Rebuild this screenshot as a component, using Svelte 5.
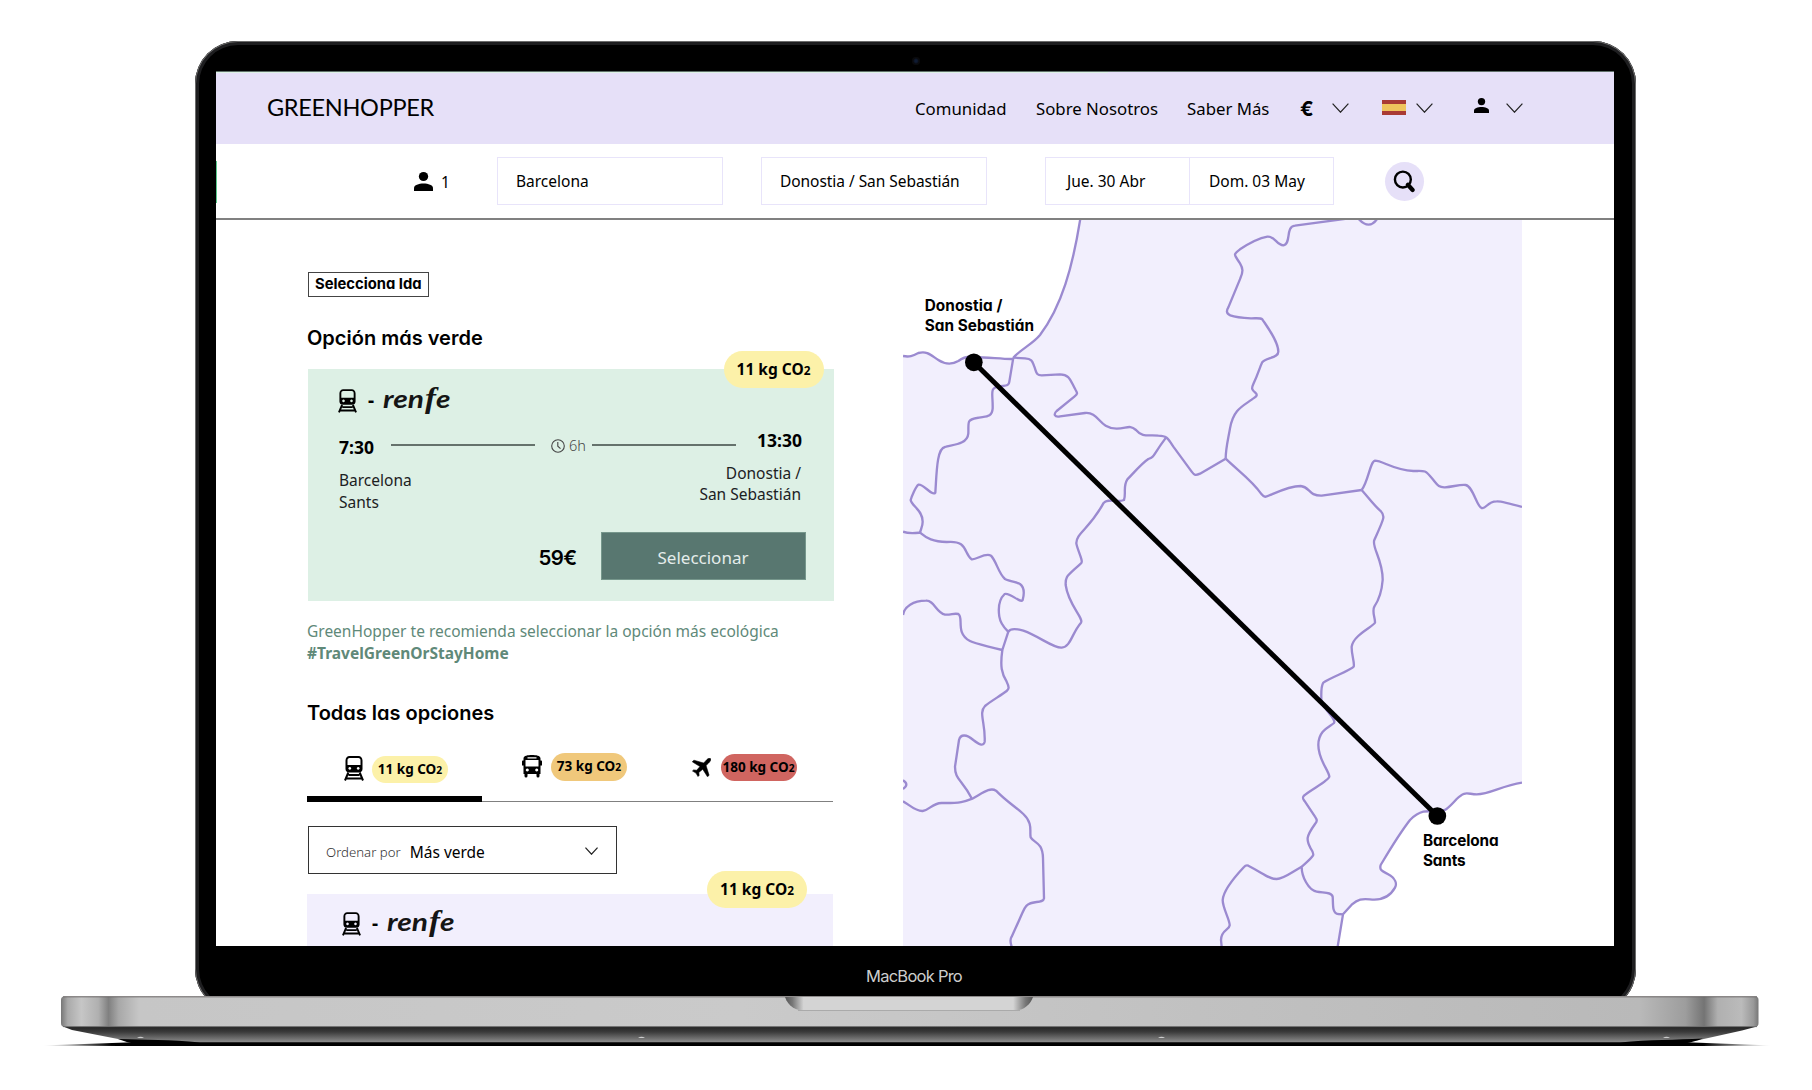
<script>
  const links = [
    { label: 'Comunidad', cls: 'l1' },
    { label: 'Sobre Nosotros', cls: 'l2' },
    { label: 'Saber Más', cls: 'l3' }
  ];

  const borders = [
    'M571 26C548 170 515 290 450 375C428 402 392 418 370 443',
    'M370 447C340 448 300 442 251 441C232 438 220 442 205 453C188 463 168 465 145 450C122 435 112 422 85 429C68 438 58 442 39 438',
    'M370 443L405 445C428 447 427 455 433 470C440 488 438 496 455 496L510 493C540 494 540 510 557 540C563 550 563 552 553 560L500 603C490 612 493 622 510 619L585 609C628 605 625 655 680 656C712 655 718 643 738 660C757 683 775 674 805 677C835 679 832 684 850 710L905 785C913 796 917 797 930 791L1007 746',
    'M1007 746C1007 715 1014 690 1020 655C1030 600 1055 590 1085 569C1093 562 1106 558 1097 549C1085 540 1084 535 1090 522C1105 490 1110 470 1116 458C1125 442 1165 445 1165 425C1165 395 1135 355 1117 328C1112 323 1100 325 1085 325C1065 324 1040 323 1021 316C1007 310 1010 300 1015 292L1051 205C1060 185 1059 175 1050 160C1032 132 1028 135 1050 118C1080 98 1110 84 1132 80C1155 78 1160 105 1180 106C1205 102 1185 50 1215 47L1370 26',
    'M1405 26Q1438 62 1462 26',
    'M1007 746C1045 783 1085 810 1115 853C1125 866 1130 859 1145 853C1180 838 1205 828 1232 828C1260 830 1255 858 1295 857L1415 840',
    'M1415 840C1435 815 1440 755 1455 752C1478 752 1510 780 1570 783C1605 783 1604 780 1620 798C1642 822 1642 833 1665 832C1690 830 1710 823 1727 825C1750 830 1760 890 1775 894C1790 897 1790 875 1820 874Q1835 873 1896 891',
    'M1415 840C1437 865 1455 890 1472 903C1487 918 1482 925 1453 990C1444 1010 1479 1050 1478 1110C1475 1150 1463 1175 1453 1190C1445 1205 1456 1225 1455 1238C1450 1250 1390 1275 1385 1310C1384 1335 1395 1360 1391 1370C1385 1380 1320 1403 1300 1418C1292 1430 1294 1450 1294 1470C1300 1500 1340 1525 1332 1539C1320 1550 1285 1560 1285 1605C1285 1650 1316 1680 1318 1700C1317 1712 1260 1740 1242 1757C1235 1764 1240 1768 1245 1775L1275 1820C1282 1830 1282 1833 1275 1842C1248 1880 1248 1890 1262 1915C1276 1935 1275 1935 1235 1970C1235 2000 1255 2040 1280 2045C1300 2049 1325 2045 1328 2060C1330 2080 1325 2110 1345 2112L1359 2113',
    'M1235 1970C1200 1990 1180 2007 1160 2007C1135 2007 1120 1990 1075 1967Q1068 1964 1062 1971C1030 2005 1000 2045 998 2070C998 2095 1020 2130 1019 2146C1018 2160 993 2160 993 2190L995 2210',
    'M1896 1718C1835 1727 1800 1753 1760 1753C1730 1752 1725 1742 1700 1767C1675 1795 1660 1808 1642 1805C1610 1802 1590 1800 1560 1830C1525 1875 1490 1935 1472 1965C1466 1985 1485 1985 1500 1996C1515 2006 1522 2020 1515 2033C1500 2060 1475 2072 1440 2068C1415 2066 1405 2067 1385 2084L1359 2113L1343 2210',
    'M370 443L358 515C357 530 345 526 325 530C298 535 309 550 308 595C306 625 285 618 260 624C230 630 236 635 235 670C232 705 185 704 165 711C140 715 140 790 136 848C126 860 100 820 85 824C78 828 65 860 62 870C65 888 98 900 98 935C98 950 92 958 90 968',
    'M39 965C55 972 70 970 90 968C110 985 130 995 170 996C235 990 220 1030 245 1048C260 1050 285 1027 303 1037C320 1055 325 1090 345 1107C360 1115 385 1117 390 1122C405 1133 402 1155 398 1170C390 1181 360 1146 344 1152C325 1170 325 1200 328 1220C332 1245 345 1255 355 1265L337 1320C270 1303 255 1301 240 1293C195 1270 222 1222 205 1212C190 1209 185 1215 165 1214C138 1208 132 1170 108 1172C70 1172 42 1190 39 1215',
    'M355 1265C362 1253 380 1256 400 1262C450 1280 490 1315 515 1313C543 1310 545 1270 573 1238C582 1225 535 1185 527 1125C526 1098 530 1100 573 1060C582 1055 562 1020 559 1000C558 970 600 955 640 880C655 862 680 880 702 870C709 850 698 830 712 808C730 790 755 760 775 747C795 740 785 740 828 683',
    'M337 1320C330 1370 335 1390 350 1415C360 1435 355 1438 350 1443C335 1455 300 1475 285 1488C265 1508 287 1540 284 1595C280 1612 265 1602 250 1590C230 1573 212 1571 207 1590L195 1670C195 1710 215 1707 245 1765',
    'M39 1774C60 1785 75 1804 98 1803C120 1800 125 1780 155 1779C210 1780 225 1775 247 1766C280 1748 300 1731 318 1742C350 1775 370 1785 400 1812C430 1840 418 1865 422 1882C432 1900 458 1895 459 1945L462 2065C460 2080 430 2072 415 2083C402 2090 400 2105 365 2180Q358 2190 365 2210',
    'M39 1711q20 12 0 26'
  ];
</script>

{#snippet train(cls)}
  <svg class={cls} viewBox="0 0 20 25">
    <path fill-rule="evenodd" d="M5.500 0h9C16.700 0 18.500 2 18.500 4.500V13C18.500 15 17 16.500 15 16.500H5C3 16.500 1.500 15 1.500 13V4.500C1.500 2 3.300 0 5.500 0ZM5.500 2C4.300 2 3.500 3 3.500 4.200V9H16.500V4.200C16.500 3 15.700 2 14.500 2ZM5.800 11a1.400 1.400 0 1 0 .01 0ZM14.200 11a1.400 1.400 0 1 0 .01 0Z" />
    <path d="M4.300 16.500 1 24.500M15.700 16.500 19 24.500M4.500 18.900h11M2.500 22.500h15" fill="none" stroke="#000" stroke-width="2" />
  </svg>
{/snippet}

{#snippet person(cls)}
  <svg class={cls} viewBox="0 0 20 20">
    <ellipse cx="10" cy="4.800" rx="4.900" ry="4.800" />
    <path d="M0 20V17C0 13.500 5 12 10 12S20 13.500 20 17V20Z" />
  </svg>
{/snippet}

{#snippet chevron(cls)}
  <svg class="chev {cls}" viewBox="0 0 17 10"><path d="M.6 .6 8.500 9.200 16.400 .6" /></svg>
{/snippet}

{#snippet co2(kg, cls)}
  <span class="badge {cls}">{kg} kg CO<small>2</small></span>
{/snippet}

{#snippet operator()}
  <div class="operator">
    {@render train('train')}
    <span class="dash">-</span>
    <svg class="renfe" viewBox="0 0 70 30">
      <text y="20" textLength="41" lengthAdjust="spacingAndGlyphs" x="1">ren</text>
      <text y="20" x="43" class="f" textLength="11" lengthAdjust="spacingAndGlyphs">f</text>
      <text y="20" x="54" textLength="14.500" lengthAdjust="spacingAndGlyphs">e</text>
    </svg>
  </div>
{/snippet}

<div class="stage">
  <div class="lid">
    <div class="shell">
      <div class="camera"></div>
      <div class="screen">
        <header>
          <div class="logo">GREENHOPPER</div>
          <nav>
            {#each links as link}
              <span class={link.cls}>{link.label}</span>
            {/each}
          </nav>
          <span class="euro">€</span>
          {@render chevron('c1')}
          <svg class="flag" viewBox="0 0 24 15"><path fill="#a93a34" d="M0 0h24v15H0z" /><path fill="#efc45c" d="M0 4h24v7H0z" /></svg>
          {@render chevron('c2')}
          {@render person('user')}
          {@render chevron('c3')}
        </header>

        <div class="search">
          {@render person('pax')}
          <span class="count">1</span>
          <div class="field">Barcelona</div>
          <div class="field to">Donostia / San Sebastián</div>
          <div class="dates"><div>Jue. 30 Abr</div><div>Dom. 03 May</div></div>
          <div class="go">
            <svg viewBox="0 0 24 24"><circle cx="10.300" cy="10" r="8.300" fill="none" stroke="#000" stroke-width="2.500" /><path d="M15.500 15.500 20.500 20.800" stroke="#000" stroke-width="4.500" stroke-linecap="round" /></svg>
          </div>
        </div>

        <main>
          <section class="results">
            <div class="tag">Selecciona Ida</div>
            <h2 class="h-a">Opción más verde</h2>
            <article class="card green">
              {@render co2(11, 'big')}
              {@render operator()}
              <div class="trip">
                <div class="from"><b>7:30</b><p>Barcelona<br />Sants</p></div>
                <i class="rule"></i>
                <span class="time">
                  <svg viewBox="0 0 14 14"><circle cx="7" cy="7" r="6.300" /><path d="M6.800 3V7.200L9.500 9.700" /></svg>6h
                </span>
                <i class="rule"></i>
                <div class="dest"><b>13:30</b><p>Donostia /<br />San Sebastián</p></div>
              </div>
              <div class="buy"><span class="price">59€</span><button>Seleccionar</button></div>
            </article>
            <p class="hint">GreenHopper te recomienda seleccionar la opción más ecológica<br /><b>#TravelGreenOrStayHome</b></p>
            <h2 class="h-b">Todas las opciones</h2>
            <div class="tabs">
              <div class="tab on">{@render train('t-train')}{@render co2(11, 'small yellow')}</div>
              <div class="tab bus">
                <svg class="t-bus" viewBox="0 0 20 23"><path fill-rule="evenodd" d="M10 0C14 0 18.500.5 18.500 3.500V5.500H19.300Q20 5.500 20 6.500V10.500H18.500V19H17.500V21Q17.500 22.500 16 22.500T14.500 21V19H5.500V21Q5.500 22.500 4 22.500T2.500 21V19H1.500V10.500H0V6.500Q0 5.500.7 5.500H1.500V3.500C1.500.5 6 0 10 0ZM3.500 5V11.500H16.500V5ZM5.500 2.200V3.400H14.500V2.200ZM5.300 13.500a1.500 1.500 0 1 0 .01 0ZM14.700 13.500a1.500 1.500 0 1 0 .01 0Z" /></svg>
                {@render co2(73, 'small orange')}
              </div>
              <div class="tab air">
                <svg class="t-air" viewBox="0 0 20 20"><path d="M17.200.5C18.500 0 20 .2 19.800 1.800 19.600 3.200 18 4.900 14.800 8L18 18.200 16.300 19.800 11.300 11.800 7.200 15.200 7.500 18.300 6.300 19.500 4.200 15.900.5 13.700 1.700 12.500 4.900 12.900 8.400 9 .3 4 2 2.300 12.200 5.300C14.800 2.700 16 1.100 17.200.5Z" stroke="#000" stroke-width=".6" /></svg>
                {@render co2(180, 'small red')}
              </div>
            </div>
            <div class="select"><span class="by">Ordenar por</span><span class="val">Más verde</span>{@render chevron('c4')}</div>
            <article class="card lilac">
              {@render co2(11, 'big second')}
              {@render operator()}
            </article>
          </section>

          <svg class="map" viewBox="39 30 1857 2178">
            <path fill="#f2effd" d="M39 30h1857v2178H39z" />
            <path fill="#fff" d="M571 26C548 170 515 290 450 375C428 402 392 418 370 443C340 448 300 442 251 441C232 438 220 442 205 453C188 463 168 465 145 450C122 435 112 422 85 429C68 438 58 442 39 438V26Z" />
            <path fill="#fff" d="{borders[9]}H1900V1718Z" />
            <g class="borders">
              {#each borders as d}
                <path {d} />
              {/each}
            </g>
            <path d="M251 457 1642 1818" stroke="#000" stroke-width="15" />
            <circle cx="251.500" cy="457" r="26.500" />
            <circle cx="1642" cy="1818" r="26.500" />
            <g class="places">
              <text x="104" y="304" textLength="233">Donostia /</text>
              <text x="104" y="362" textLength="328">San Sebastián</text>
              <text x="1599" y="1909" textLength="227">Barcelona</text>
              <text x="1599" y="1967" textLength="128">Sants</text>
            </g>
          </svg>
        </main>
      </div>
      <div class="model">MacBook Pro</div>
    </div>
  </div>

  <svg class="base" viewBox="0 996 1812 94">
    <defs>
      <linearGradient id="deck">
        <stop offset="0" stop-color="#777" /><stop offset=".004" stop-color="#aaa" /><stop offset=".012" stop-color="#c6c6c6" />
        <stop offset=".022" stop-color="#b0b0b0" /><stop offset=".028" stop-color="#808080" /><stop offset=".034" stop-color="#a8a8a8" />
        <stop offset=".046" stop-color="#c6c6c6" /><stop offset=".4" stop-color="#cacaca" /><stop offset=".7" stop-color="#c0c0c0" /><stop offset=".93" stop-color="#b9b9b9" />
        <stop offset=".957" stop-color="#9d9d9d" /><stop offset=".968" stop-color="#747474" /><stop offset=".976" stop-color="#b0b0b0" />
        <stop offset=".99" stop-color="#bbb" /><stop offset=".997" stop-color="#999" /><stop offset="1" stop-color="#777" />
      </linearGradient>
      <linearGradient id="under" x2="0" y2="1">
        <stop offset="0" stop-color="#222" /><stop offset=".35" stop-color="#3c3c3c" /><stop offset="1" stop-color="#909090" />
      </linearGradient>
      <linearGradient id="notch">
        <stop offset="0" stop-color="#555" /><stop offset=".03" stop-color="#777" /><stop offset=".075" stop-color="#d4d4d4" />
        <stop offset=".92" stop-color="#d4d4d4" /><stop offset=".97" stop-color="#777" /><stop offset="1" stop-color="#555" />
      </linearGradient>
      <linearGradient id="ground">
        <stop offset="0" stop-color="#000" stop-opacity="0" /><stop offset=".04" stop-color="#000" /><stop offset=".96" stop-color="#000" /><stop offset="1" stop-color="#000" stop-opacity="0" />
      </linearGradient>
    </defs>
    <path fill="url(#ground)" d="M42 1045.500 140 1042H1680L1772 1045.500 1700 1046H120Z" />
    <path fill="url(#under)" d="M63 1026.500H1757L1742 1030.500 1697 1040.500 1680 1042.500H135L118 1039 72 1030Z" />
    <path d="M118 1039C145 1040 170 1039.500 200 1042.500H1620C1650 1039.500 1675 1040 1703 1038.500 1692 1042.500 1680 1045.500 1660 1045.500H160C140 1045.500 130 1043.500 118 1039Z" />
    <path d="M61 1000Q61 996.500 64 996.500H1755.500Q1758.500 996.500 1758.500 1000V1023Q1758.500 1026.800 1755.500 1026.800H64Q61 1026.800 61 1023Z" fill="url(#deck)" />
    <path d="M63 1026.600H1757" stroke="#6d6d6d" stroke-width="1" />
    <path d="M63 996.800H1757" stroke="#6a6666" stroke-width="1" />
    <path d="M785 997C788 1006 796 1011 806 1011H1012C1022 1011 1030 1006 1033 997Z" fill="url(#notch)" />
    <path d="M798 1010.500H1020" stroke="#aaa" stroke-width="1" />
    <g fill="#ccc"><path d="M137 1038q3.500-2.500 7 0zM638 1038q3.500-2.500 7 0zM1158 1038q3.500-2.500 7 0zM1663 1038q3.500-2.500 7 0z" /></g>
  </svg>
</div>

<style>
  :global(body) { background: #fff; }
  .stage { width: 1812px; height: 1090px; overflow: hidden; background: #fff; font-family: 'Noto Sans', 'Open Sans', sans-serif; font-size: 15.500px; color: #000; }
  .stage :is(p, h2) { margin: 0; }
  .stage svg { display: block; flex: none; }
  .lid { margin: 41px 0 0 195px; width: 1441px; height: 955px; overflow: hidden; }
  .shell { box-sizing: border-box; width: 1441px; height: 971px; border-radius: 43px; background: #000; padding: 30px 22px 0 21px; box-shadow: inset 0 0 0 1px #6b6b6b, inset 0 0 0 4px #1e1e20; position: relative; }
  .camera { position: absolute; left: 717px; top: 16px; width: 8px; height: 8px; border-radius: 50%; background: radial-gradient(#0f1b33 20%, #08080a 55%, #121215); }
  .screen { width: 1398px; height: 875px; background: #fff; overflow: hidden; position: relative; border-top: 1px solid #60706a; box-sizing: border-box; }
  .screen::before { content: ''; position: absolute; left: 0; top: 0; width: 892px; height: 1px; background: #dcf1e5; }
  .screen::after { content: ''; position: absolute; left: 0; top: 89px; width: 1px; height: 42px; background: #58c98c; }
  .model { color: #cdcdcd; font: 400 16.500px/20px Inter, sans-serif; text-align: center; margin-top: 19.500px; letter-spacing: -.75px; padding-right: 2px; }

  header { height: 72px; background: #e6e0f8; display: flex; align-items: center; }
  .logo { font: 400 23.500px/28px Lato, sans-serif; margin: -2px 0 0 51px; width: 648px; letter-spacing: -.3px; }
  nav { display: flex; font-size: 16.800px; line-height: 24px; padding-top: 2px; white-space: nowrap; }
  .l1 { width: 121px; }
  .l2 { width: 151px; }
  .l3 { width: 113px; }
  .euro { font: 700 20px/24px Inter, sans-serif; width: 32px; padding-top: 2px; box-sizing: border-box; }
  .chev { width: 17px; height: 10px; margin-top: -1px; fill: none; stroke: #222; stroke-width: 1.200; }
  .c1 { margin-right: 33px; }
  .flag { width: 24px; height: 15px; margin: -2px 10px 0 0; }
  .c2 { margin-right: 41px; }
  .user { width: 15px; height: 15px; margin: 0 17px 5px 0; }

  .search { height: 74px; border-bottom: 2px solid #808080; display: flex; align-items: center; }
  .pax { width: 19px; height: 19px; margin-left: 198px; }
  .count { width: 56px; margin-left: 8px; padding-top: 1px; }
  .field { box-sizing: border-box; width: 226px; height: 48px; border: 1.500px solid #e8e4fa; padding-left: 18px; line-height: 47px; white-space: nowrap; }
  .to { margin-left: 38px; letter-spacing: -.05px; }
  .dates { display: flex; margin-left: 58px; width: 289px; height: 48px; box-sizing: border-box; border: 1.500px solid #e8e4fa; line-height: 46px; }
  .dates div { width: 143px; box-sizing: border-box; padding-left: 21px; }
  .dates div + div { border-left: 1px solid #e8e4fa; padding-left: 19px; }
  .go { width: 39px; height: 39px; border-radius: 50%; background: #e6e0f8; margin-left: 51px; display: grid; place-items: center; }
  .go svg { width: 23px; height: 23px; }

  main { display: flex; height: 726px; }
  .results { width: 526px; margin-left: 92px; padding-top: 52px; }
  .map { width: 619px; height: 726px; margin-left: 69px; }
  .borders { fill: none; stroke: #9b8ad0; stroke-width: 7; stroke-linejoin: round; }
  .places { font: 700 46px Inter, sans-serif; font-feature-settings: 'cv11'; }
  .tag { box-sizing: border-box; width: 121px; height: 25px; border: 1.500px solid #444; font: 700 14.800px/23px Inter, sans-serif; font-feature-settings: 'cv11'; padding-left: 6px; white-space: nowrap; }
  h2 { font: 600 20px/28px Inter, sans-serif; font-feature-settings: 'cv11'; white-space: nowrap; }
  .h-a { padding-top: 27px; margin-left: -1px !important; }
  .card { position: relative; box-sizing: border-box; width: 526px; padding-left: 30px; }
  .green { background: #ddf0e5; height: 232px; margin-top: 17px; padding-top: 20px; }
  .lilac { background: #f2effd; height: 80px; margin: 20px 0 0 -1px; padding: 18px 0 0 35px; }
  .badge { font-weight: 700; white-space: nowrap; border-radius: 20px; text-align: center; box-sizing: border-box; }
  .badge small { font-size: .76em; }
  .big { position: absolute; left: 415.500px; top: -18px; width: 100px; height: 37px; line-height: 37px; background: #fcf1a9; font-size: 15.500px; }
  .second { left: 400px; top: -23px; }
  .operator { display: flex; height: 25px; }
  .train { width: 19px; height: 24px; }
  .dash { font-weight: 700; font-size: 19px; line-height: 22px; width: 7px; margin: 0 7px 0 11px; }
  .renfe { width: 70px; height: 30px; margin-top: -1px; overflow: visible; }
  .renfe text { font: italic 700 24px Lato, sans-serif; fill: #151515; }
  .renfe .f { font: italic 700 29px 'Liberation Serif', serif; }
  .trip { display: flex; margin-top: 19px; height: 99px; }
  .trip b { font-size: 17.500px; line-height: 24px; display: block; }
  .trip p { line-height: 21.500px; color: #1c211f; white-space: nowrap; }
  .from { width: 52px; padding-top: 2px; margin-left: 1px; }
  .from p { margin-top: 11px; }
  .rule { width: 144px; height: 2px; margin-top: 10.500px; background: #65726c; flex: none; }
  .time { width: 57px; display: flex; font-weight: 300; font-size: 14.500px; line-height: 24px; color: #444; }
  .time svg { width: 14px; height: 14px; margin: 6px 4px 0 16px; fill: none; stroke: #444; stroke-width: 1.100; }
  .dest { width: 66px; display: flex; flex-direction: column; align-items: flex-end; margin-top: -5px; }
  .dest p { text-align: right; margin: 10.500px 1px 0 0; }
  .buy { display: flex; height: 48px; align-items: center; justify-content: flex-end; padding-right: 28.500px; }
  .price { font: 600 20.500px/28px Inter, sans-serif; margin: 3px 24px 0 0; letter-spacing: -.6px; }
  button { width: 205px; height: 48px; border: 1px solid #76978c; background: #587770; color: #e4ecea; font: 400 17px 'Noto Sans', sans-serif; padding: 2px 0 0; }
  .hint { color: #5f8979; line-height: 21.500px; padding-top: 20px; white-space: nowrap; margin-left: -1px !important; }
  .h-b { padding-top: 35px; margin-left: -1px !important; }
  .tabs { display: flex; margin: 15px 0 0 -1px; width: 526px; height: 59px; border-bottom: 1.500px solid #808080; }
  .tab { display: flex; height: 60px; box-sizing: border-box; }
  .on { width: 175px; border-bottom: 6px solid #000; padding: 13.500px 0 0 37px; height: 60px; }
  .bus { padding: 11px 0 0 40px; width: 170px; }
  .air { padding: 11.500px 0 0 39.500px; }
  .t-train { width: 20px; height: 25px; margin-right: 8px; }
  .t-bus { width: 20px; height: 23px; margin: 2px 9px 0 0; }
  .t-air { width: 19px; height: 19px; margin: 4px 10px 0 0; }
  .small { width: 76px; height: 27.500px; line-height: 27px; font-size: 13.500px; }
  .yellow { background: #fcf1a9; }
  .orange { background: #f0c87b; }
  .red { background: #d06560; }
  .select { box-sizing: border-box; width: 309px; height: 48px; border: 1.500px solid #333; margin: 24px 0 0; display: flex; align-items: center; padding: 4px 18px 0 17px; white-space: nowrap; }
  .by { font-weight: 300; font-size: 13.200px; width: 84px; color: #333; }
  .val { width: 176px; }
  .c4 { width: 13px; height: 8px; margin-top: -3px; stroke-width: 1.600; }
  .base { width: 1812px; height: 94px; }
</style>
